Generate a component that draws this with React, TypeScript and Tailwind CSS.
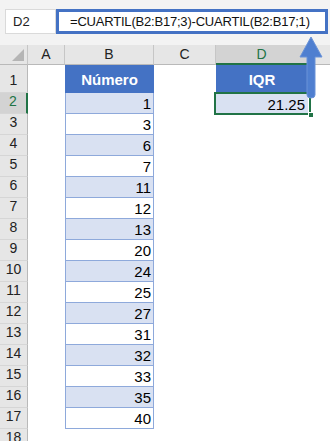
import React from "react";

const numbers = [1, 3, 6, 7, 11, 12, 13, 20, 24, 25, 27, 31, 32, 33, 35, 40];

const font = { fontFamily: '"Liberation Sans", Arial, sans-serif' };

const RowHead: React.FC<{ n: number; active?: boolean; h: string }> = ({ n, active, h }) => (
  <div
    className={`w-[28px] ${h} shrink-0 flex items-end justify-center pb-[1px] text-[14px] border-b border-[#d6d6d6] ${
      active
        ? "bg-[#d3d3d3] text-[#217346] border-r-2 border-r-[#217346]"
        : "bg-[#e6e6e6] text-[#222] border-r border-r-[#b9b9b9]"
    }`}
  >
    {n}
  </div>
);

const App: React.FC = () => {
  return (
    <div className="relative w-[330px] h-[441px] overflow-hidden bg-white text-black" style={font}>
      {/* Formula bar */}
      <div className="h-[45px] bg-[#f3f3f3] flex items-start pt-[9px] pl-[5px]">
        <div className="w-[51px] h-[25px] bg-white border border-[#dadada] flex items-center pl-[7px] text-[13px] text-[#222]">
          D2
        </div>
        <div className="w-[272px] h-[25px] bg-white border-[3px] border-[#4472c4] flex items-center pl-[11px] text-[13px] tracking-[-0.2px] text-[#111]">
          =CUARTIL(B2:B17;3)-CUARTIL(B2:B17;1)
        </div>
      </div>

      {/* Column headers */}
      <div className="flex h-[20px] bg-[#e6e6e6] text-[14px] text-[#222]">
        <div className="w-[28px] border-r border-[#c6c6c6] border-b border-b-[#b9b9b9] relative">
          <div className="absolute right-[3px] bottom-[3px] w-0 h-0 border-l-[12px] border-l-transparent border-b-[12px] border-b-[#b5b5b5]" />
        </div>
        <div className="w-[37px] border-r border-[#c6c6c6] border-b border-b-[#b9b9b9] flex items-center justify-center">A</div>
        <div className="w-[89px] border-r border-[#c6c6c6] border-b border-b-[#b9b9b9] flex items-center justify-center">B</div>
        <div className="w-[62px] border-r border-[#c6c6c6] border-b border-b-[#b9b9b9] flex items-center justify-center">C</div>
        <div className="w-[92px] bg-[#d3d3d3] border-r border-[#c6c6c6] border-b-2 border-b-[#217346] flex items-center justify-center text-[#217346]">D</div>
        <div className="flex-1 border-b border-b-[#b9b9b9]" />
      </div>

      {/* Row 1 */}
      <div className="flex h-[28px]">
        <RowHead n={1} h="h-[28px]" />
        <div className="w-[37px]" />
        <div className="w-[89px] bg-[#4472c4] text-white font-bold text-[15px] flex items-end justify-center pb-[2px]">
          Número
        </div>
        <div className="w-[62px]" />
        <div className="w-[92px] bg-[#4472c4] text-white font-bold text-[15px] flex items-end justify-center pb-[2px]">
          IQR
        </div>
      </div>

      {/* Rows 2-17 */}
      {numbers.map((v, i) => {
        const row = i + 2;
        const blue = row % 2 === 0;
        return (
          <div key={row} className="flex h-[21px]">
            <RowHead n={row} active={row === 2} h="h-[21px]" />
            <div className="w-[37px]" />
            <div
              className={`w-[89px] border-x border-b border-[#8ea9db] flex items-end justify-end pr-[2px] text-[15px] leading-[19px] ${
                blue ? "bg-[#d9e1f2]" : "bg-white"
              }`}
            >
              {v}
            </div>
            <div className="w-[62px]" />
            {row === 2 && (
              <div className="relative w-[92px] bg-[#d9e1f2] flex items-end justify-end pr-[3px] text-[15px] leading-[19px]">
                21.25
                <div className="absolute -left-[2px] -top-[1px] -right-[3px] -bottom-[1px] border-2 border-[#217346]" />
                <div className="absolute -right-[6px] -bottom-[4px] w-[6px] h-[6px] bg-[#217346] border border-white" />
              </div>
            )}
          </div>
        );
      })}

      {/* Row 18 */}
      <div className="flex h-[21px]">
        <RowHead n={18} h="h-[21px]" />
      </div>

      {/* Arrow */}
      <svg className="absolute left-[298px] top-[36px]" width="26" height="64" viewBox="0 0 26 64">
        <path d="M13 1 L24 21 L17 21 L17 59 Q17 62 13 62 Q9 62 9 59 L9 21 L2 21 Z" fill="#4f7fd0" stroke="#6a93d8" strokeWidth="1" />
      </svg>
    </div>
  );
};

export default App;
